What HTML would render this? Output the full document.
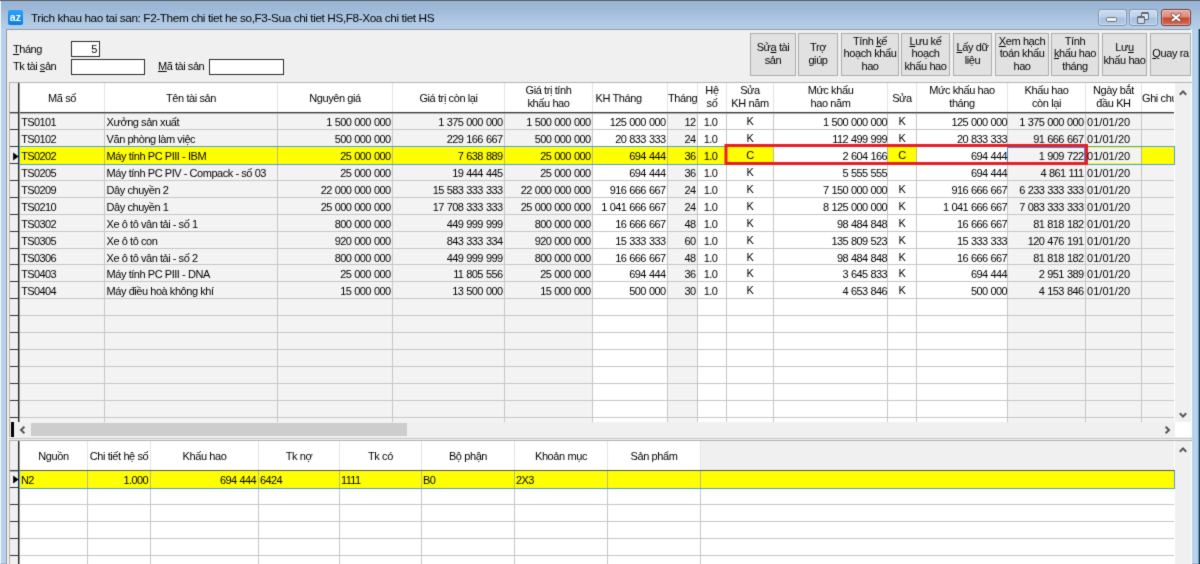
<!DOCTYPE html>
<html lang="vi"><head><meta charset="utf-8"><title>Trich khau hao tai san</title>
<style>
html,body{margin:0;padding:0}
body{width:1200px;height:564px;overflow:hidden;position:relative;background:#dfe6ee;font-family:"Liberation Sans",sans-serif;font-size:11px;color:#000}
div,span{position:absolute;box-sizing:border-box}
.t{white-space:nowrap;line-height:13px;height:13px;letter-spacing:-0.45px}
.n{letter-spacing:-0.62px;word-spacing:0.6px}
.r{text-align:right}.c{text-align:center}
.h{white-space:nowrap;line-height:12.5px;text-align:center;letter-spacing:-0.4px}
.btn{background:#e1e1e1;border:1px solid #adadad;top:33px;height:43px}
.btn span{left:-10px;right:-10px;text-align:center;line-height:12.4px;white-space:nowrap;letter-spacing:-0.4px}
u{text-decoration:underline;text-underline-offset:1px}
.vl{width:1px;background:#c6c6c6}
.hl{height:1px;background:#c6c6c6}
.tb{background:#fff;border:1px solid #2b2b2b}
#w{left:0;top:0;width:1200px;height:564px;filter:url(#soft)}
</style></head><body><svg width="0" height="0" style="position:absolute"><defs><filter id="soft" x="0" y="0" width="100%" height="100%" color-interpolation-filters="sRGB"><feConvolveMatrix order="3" kernelMatrix="0.02 0.08 0.02 0.08 0.6 0.08 0.02 0.08 0.02" edgeMode="duplicate" preserveAlpha="true"/></filter></defs></svg><div id="w">

<div style="left:0;top:0;width:1200px;height:29px;background:linear-gradient(#98b4d2 0,#9db8d6 8px,#adc7e3 20px,#b5cee8 29px)"></div>
<div style="left:0;top:0;width:1200px;height:1px;background:#5a5f66"></div>
<div style="left:0;top:1px;width:1px;height:563px;background:#f4f7fb"></div>
<div style="left:1px;top:29px;width:6px;height:535px;background:#b9d1ea"></div>
<div style="left:1192px;top:29px;width:7px;height:535px;background:#b9d1ea"></div>
<div style="left:1198px;top:29px;width:1px;height:535px;background:#6f9db5"></div>
<div style="left:1199px;top:29px;width:1px;height:535px;background:#0b3f55"></div>
<div style="left:6px;top:29px;width:1186px;height:540px;border:1px solid #979a9e;border-right:2px solid #fafafa;background:#f0f0f0"></div>
<div style="left:8px;top:10px;width:15px;height:15px;border-radius:2px;background:linear-gradient(#2aa3f7,#0a7be4)"><span style="left:0;width:15px;top:1px;text-align:center;color:#fff;font-weight:bold;font-size:10.5px;line-height:12px;letter-spacing:0.2px">az</span></div>
<div class="t" style="left:31px;top:11px;font-size:11.8px;line-height:15px;height:15px;letter-spacing:-0.41px">Trich khau hao tai san: F2-Them chi tiet he so,F3-Sua chi tiet HS,F8-Xoa chi tiet HS</div>
<div style="left:1098px;top:9px;width:29px;height:17px;border:1px solid #8097b3;border-radius:3px;box-shadow:inset 0 0 0 1px rgba(255,255,255,.38);background:linear-gradient(#c9dcf0 0,#bcd2ea 48%,#a6c1df 52%,#b1cae5 100%)"><span style="left:7px;top:7px;width:11px;height:5px;border:1px solid #6b6f76;border-radius:1.5px;background:#f2f2f2"></span></div>
<div style="left:1129px;top:9px;width:29px;height:17px;border:1px solid #8097b3;border-radius:3px;box-shadow:inset 0 0 0 1px rgba(255,255,255,.38);background:linear-gradient(#c9dcf0 0,#bcd2ea 48%,#a6c1df 52%,#b1cae5 100%)"><span style="left:11px;top:2px;width:8px;height:8px;border:1px solid #5d6470;border-top-width:2px;border-radius:1.5px;background:#dfe8f2"></span><span style="left:7px;top:6px;width:8px;height:8px;border:1px solid #5d6470;border-top-width:2px;border-radius:1.5px;background:#cfdcec"></span></div>
<div style="left:1161px;top:9px;width:30px;height:17px;border:1px solid #7b3a3a;border-radius:3px;box-shadow:inset 0 0 0 1px rgba(255,255,255,.38);background:linear-gradient(#e9aa9c 0,#dd8a78 48%,#c6432a 52%,#d36e58 100%)"><svg style="position:absolute;left:8px;top:2px" width="12" height="11" viewBox="0 0 12 11"><path d="M2.6 2.6 L9.4 8.4 M9.4 2.6 L2.6 8.4" stroke="#6a3a3a" stroke-width="3.6" stroke-linecap="round"/><path d="M2.6 2.6 L9.4 8.4 M9.4 2.6 L2.6 8.4" stroke="#fff" stroke-width="2.1" stroke-linecap="round"/></svg></div>
<div class="t" style="left:13px;top:43px"><u>T</u>háng</div>
<div class="tb" style="left:71px;top:41px;width:29px;height:16px"></div>
<div class="t r" style="left:71px;top:43px;width:26px">5</div>
<div class="t" style="left:13px;top:60px">Tk tài <u>s</u>ản</div>
<div class="tb" style="left:71px;top:59px;width:74px;height:16px"></div>
<div class="t" style="left:158px;top:60px"><u>M</u>ã tài sản</div>
<div class="tb" style="left:209px;top:59px;width:75px;height:16px"></div>
<div class="btn" style="left:750px;width:46px"><span style="top:7.1px">Sử<u>a</u> tài<br>sản</span></div>
<div class="btn" style="left:798px;width:40px"><span style="top:7.1px">Trợ<br>giúp</span></div>
<div class="btn" style="left:841px;width:58px"><span style="top:0.9px">Tính <u>k</u>ế<br>hoạch khấu<br>hao</span></div>
<div class="btn" style="left:901px;width:49px"><span style="top:0.9px"><u>L</u>ưu kế<br>hoạch<br>khấu hao</span></div>
<div class="btn" style="left:953px;width:39px"><span style="top:7.1px"><u>L</u>ấy dữ<br>liệu</span></div>
<div class="btn" style="left:995px;width:54px"><span style="top:0.9px"><u>X</u>em hạch<br>toán khấu<br>hao</span></div>
<div class="btn" style="left:1051px;width:48px"><span style="top:0.9px">Tính<br><u>k</u>hấu hao<br>tháng</span></div>
<div class="btn" style="left:1102px;width:45px"><span style="top:7.1px">Lư<u>u</u><br>khấu hao</span></div>
<div class="btn" style="left:1150px;width:41px"><span style="top:13.3px"><u>Q</u>uay ra</span></div>
<div style="left:9px;top:82px;width:1183px;height:358px;background:#fff;border:1px solid #b2b2b2;border-right:0;border-bottom:0"></div>
<div style="left:10px;top:83px;width:8px;height:339px;background:#f0f0f0"></div>
<div style="left:20px;top:113px;width:84px;height:309px;background:#f3f3f3"></div>
<div style="left:105px;top:113px;width:172px;height:309px;background:#f3f3f3"></div>
<div style="left:278px;top:113px;width:114px;height:309px;background:#f3f3f3"></div>
<div style="left:393px;top:113px;width:111px;height:309px;background:#f3f3f3"></div>
<div style="left:505px;top:113px;width:87px;height:309px;background:#f3f3f3"></div>
<div style="left:668px;top:113px;width:29px;height:309px;background:#f3f3f3"></div>
<div style="left:1008px;top:113px;width:77px;height:309px;background:#f3f3f3"></div>
<div style="left:1086px;top:113px;width:55px;height:309px;background:#f3f3f3"></div>
<div style="left:1142px;top:113px;width:32px;height:309px;background:#f3f3f3"></div>
<div class="vl" style="left:104px;top:83px;height:29px;background:#e4e4e4"></div>
<div class="vl" style="left:277px;top:83px;height:29px;background:#e4e4e4"></div>
<div class="vl" style="left:392px;top:83px;height:29px;background:#e4e4e4"></div>
<div class="vl" style="left:504px;top:83px;height:29px;background:#e4e4e4"></div>
<div class="vl" style="left:592px;top:83px;height:29px;background:#e4e4e4"></div>
<div class="vl" style="left:667px;top:83px;height:29px;background:#e4e4e4"></div>
<div class="vl" style="left:697px;top:83px;height:29px;background:#e4e4e4"></div>
<div class="vl" style="left:726px;top:83px;height:29px;background:#e4e4e4"></div>
<div class="vl" style="left:773px;top:83px;height:29px;background:#e4e4e4"></div>
<div class="vl" style="left:887px;top:83px;height:29px;background:#e4e4e4"></div>
<div class="vl" style="left:916px;top:83px;height:29px;background:#e4e4e4"></div>
<div class="vl" style="left:1007px;top:83px;height:29px;background:#e4e4e4"></div>
<div class="vl" style="left:1085px;top:83px;height:29px;background:#e4e4e4"></div>
<div class="vl" style="left:1141px;top:83px;height:29px;background:#e4e4e4"></div>
<div class="vl" style="left:104px;top:113px;height:309px"></div>
<div class="vl" style="left:277px;top:113px;height:309px"></div>
<div class="vl" style="left:392px;top:113px;height:309px"></div>
<div class="vl" style="left:504px;top:113px;height:309px"></div>
<div class="vl" style="left:592px;top:113px;height:309px"></div>
<div class="vl" style="left:667px;top:113px;height:309px"></div>
<div class="vl" style="left:697px;top:113px;height:309px"></div>
<div class="vl" style="left:726px;top:113px;height:309px"></div>
<div class="vl" style="left:773px;top:113px;height:309px"></div>
<div class="vl" style="left:887px;top:113px;height:309px"></div>
<div class="vl" style="left:916px;top:113px;height:309px"></div>
<div class="vl" style="left:1007px;top:113px;height:309px"></div>
<div class="vl" style="left:1085px;top:113px;height:309px"></div>
<div class="vl" style="left:1141px;top:113px;height:309px"></div>
<div class="hl" style="left:19px;top:129px;width:1155px"></div>
<div style="left:10px;top:129px;width:9px;height:1px;background:#333"></div>
<div class="hl" style="left:19px;top:146px;width:1155px"></div>
<div style="left:10px;top:146px;width:9px;height:1px;background:#333"></div>
<div class="hl" style="left:19px;top:163px;width:1155px"></div>
<div style="left:10px;top:163px;width:9px;height:1px;background:#333"></div>
<div class="hl" style="left:19px;top:180px;width:1155px"></div>
<div style="left:10px;top:180px;width:9px;height:1px;background:#333"></div>
<div class="hl" style="left:19px;top:197px;width:1155px"></div>
<div style="left:10px;top:197px;width:9px;height:1px;background:#333"></div>
<div class="hl" style="left:19px;top:214px;width:1155px"></div>
<div style="left:10px;top:214px;width:9px;height:1px;background:#333"></div>
<div class="hl" style="left:19px;top:231px;width:1155px"></div>
<div style="left:10px;top:231px;width:9px;height:1px;background:#333"></div>
<div class="hl" style="left:19px;top:248px;width:1155px"></div>
<div style="left:10px;top:248px;width:9px;height:1px;background:#333"></div>
<div class="hl" style="left:19px;top:264px;width:1155px"></div>
<div style="left:10px;top:264px;width:9px;height:1px;background:#333"></div>
<div class="hl" style="left:19px;top:281px;width:1155px"></div>
<div style="left:10px;top:281px;width:9px;height:1px;background:#333"></div>
<div class="hl" style="left:19px;top:298px;width:1155px"></div>
<div style="left:10px;top:298px;width:9px;height:1px;background:#333"></div>
<div class="hl" style="left:19px;top:315px;width:1155px"></div>
<div style="left:10px;top:315px;width:9px;height:1px;background:#333"></div>
<div class="hl" style="left:19px;top:332px;width:1155px"></div>
<div style="left:10px;top:332px;width:9px;height:1px;background:#333"></div>
<div class="hl" style="left:19px;top:349px;width:1155px"></div>
<div style="left:10px;top:349px;width:9px;height:1px;background:#333"></div>
<div class="hl" style="left:19px;top:366px;width:1155px"></div>
<div style="left:10px;top:366px;width:9px;height:1px;background:#333"></div>
<div class="hl" style="left:19px;top:383px;width:1155px"></div>
<div style="left:10px;top:383px;width:9px;height:1px;background:#333"></div>
<div class="hl" style="left:19px;top:400px;width:1155px"></div>
<div style="left:10px;top:400px;width:9px;height:1px;background:#333"></div>
<div class="hl" style="left:19px;top:417px;width:1155px"></div>
<div style="left:10px;top:417px;width:9px;height:1px;background:#333"></div>
<div style="left:10px;top:112px;width:1164px;height:1px;background:#3a3a3a"></div>
<div style="left:10px;top:113px;width:1164px;height:1px;background:#b0b0b0"></div>
<div style="left:18px;top:83px;width:1px;height:339px;background:#222"></div>
<div style="left:19px;top:83px;width:1px;height:339px;background:#9a9a9a"></div>
<div class="h" style="left:20px;top:92.0px;width:84px;overflow:hidden;height:14px">Mã số</div>
<div class="h" style="left:105px;top:92.0px;width:172px;overflow:hidden;height:14px">Tên tài sản</div>
<div class="h" style="left:278px;top:92.0px;width:114px;overflow:hidden;height:14px">Nguyên giá</div>
<div class="h" style="left:393px;top:92.0px;width:111px;overflow:hidden;height:14px">Giá trị còn lại</div>
<div class="h" style="left:505px;top:84.3px;width:87px;overflow:hidden;height:27px">Giá trị tính<br>khấu hao</div>
<div class="h" style="left:593px;top:92.0px;width:74px;text-align:left;padding-left:2.5px;overflow:hidden;height:14px">KH Tháng</div>
<div class="h" style="left:668px;top:92.0px;width:29px;overflow:hidden;height:14px">Tháng</div>
<div class="h" style="left:698px;top:84.3px;width:28px;overflow:hidden;height:27px">Hệ<br>số</div>
<div class="h" style="left:727px;top:84.3px;width:46px;overflow:hidden;height:27px">Sửa<br>KH năm</div>
<div class="h" style="left:774px;top:84.3px;width:113px;overflow:hidden;height:27px">Mức khấu<br>hao năm</div>
<div class="h" style="left:888px;top:92.0px;width:28px;overflow:hidden;height:14px">Sửa</div>
<div class="h" style="left:917px;top:84.3px;width:90px;overflow:hidden;height:27px">Mức khấu hao<br>tháng</div>
<div class="h" style="left:1008px;top:84.3px;width:77px;overflow:hidden;height:27px">Khấu hao<br>còn lại</div>
<div class="h" style="left:1086px;top:84.3px;width:55px;overflow:hidden;height:27px">Ngày bắt<br>đầu KH</div>
<div class="h" style="left:1142px;top:92.0px;width:32px;text-align:left;overflow:hidden;height:14px">Ghi chú</div>
<div style="left:19px;top:146px;width:1156px;height:19px;background:#ffff00;border:1px solid #4f9de0"></div>
<div style="left:774px;top:147px;width:113px;height:17px;background:#fff"></div>
<div style="left:917px;top:147px;width:90px;height:17px;background:#fff"></div>
<div style="left:1008px;top:147px;width:77px;height:17px;background:#f3f3f3"></div>
<div style="left:1086px;top:148px;width:55px;height:15px;background:#f3f3f3"></div>
<div class="vl" style="left:104px;top:147px;height:17px;background:#b9b97a"></div>
<div class="vl" style="left:277px;top:147px;height:17px;background:#b9b97a"></div>
<div class="vl" style="left:392px;top:147px;height:17px;background:#b9b97a"></div>
<div class="vl" style="left:504px;top:147px;height:17px;background:#b9b97a"></div>
<div class="vl" style="left:592px;top:147px;height:17px;background:#b9b97a"></div>
<div class="vl" style="left:667px;top:147px;height:17px;background:#b9b97a"></div>
<div class="vl" style="left:697px;top:147px;height:17px;background:#b9b97a"></div>
<div class="vl" style="left:726px;top:147px;height:17px;background:#b9b97a"></div>
<div class="vl" style="left:773px;top:147px;height:17px;background:#b9b97a"></div>
<div class="vl" style="left:887px;top:147px;height:17px;background:#b9b97a"></div>
<div class="vl" style="left:916px;top:147px;height:17px;background:#b9b97a"></div>
<div class="vl" style="left:1007px;top:147px;height:17px;background:#b9b97a"></div>
<div class="vl" style="left:1085px;top:147px;height:17px;background:#b9b97a"></div>
<div class="vl" style="left:1141px;top:147px;height:17px;background:#b9b97a"></div>
<div style="left:1007px;top:147px;width:78px;height:17px;border:1px solid #3c8fe0"></div>
<svg style="position:absolute;left:720px;top:140px" width="372" height="30" viewBox="720 140 372 30"><rect x="726" y="145.5" width="360.5" height="18" fill="none" stroke="#ed1c24" stroke-width="3"/></svg>
<svg style="position:absolute;left:12px;top:152px" width="8" height="10" viewBox="0 0 8 10"><path d="M1.1 0.6 L6.6 4.6 L1.1 8.6 Z" fill="#000"/></svg>
<div id="ct" style="left:0;top:0;width:1175px;height:440px;transform:translateY(0.5px)">
<div class="t" style="left:21.3px;letter-spacing:-0.65px;top:115px">TS0101</div>
<div class="t" style="left:106.6px;top:115px">Xưởng sản xuất</div>
<div class="t r n" style="left:278px;width:112.4px;top:115px">1 500 000 000</div>
<div class="t r n" style="left:393px;width:109.4px;top:115px">1 375 000 000</div>
<div class="t r n" style="left:505px;width:85.4px;top:115px">1 500 000 000</div>
<div class="t r n" style="left:593px;width:72.4px;top:115px">125 000 000</div>
<div class="t r n" style="left:668px;width:27.4px;top:115px">12</div>
<div class="t c n" style="left:696.5px;width:28px;top:115px">1.0</div>
<div class="t c" style="left:727.0px;width:46px;top:114px">K</div>
<div class="t r n" style="left:774px;width:113.0px;top:115px">1 500 000 000</div>
<div class="t c" style="left:888.0px;width:28px;top:114px">K</div>
<div class="t r n" style="left:917px;width:90.0px;top:115px">125 000 000</div>
<div class="t r n" style="left:1008px;width:75.4px;top:115px">1 375 000 000</div>
<div class="t" style="left:1087px;letter-spacing:0.05px;top:115px">01/01/20</div>
<div class="t" style="left:21.3px;letter-spacing:-0.65px;top:132px">TS0102</div>
<div class="t" style="left:106.6px;top:132px">Văn phòng làm việc</div>
<div class="t r n" style="left:278px;width:112.4px;top:132px">500 000 000</div>
<div class="t r n" style="left:393px;width:109.4px;top:132px">229 166 667</div>
<div class="t r n" style="left:505px;width:85.4px;top:132px">500 000 000</div>
<div class="t r n" style="left:593px;width:72.4px;top:132px">20 833 333</div>
<div class="t r n" style="left:668px;width:27.4px;top:132px">24</div>
<div class="t c n" style="left:696.5px;width:28px;top:132px">1.0</div>
<div class="t c" style="left:727.0px;width:46px;top:131px">K</div>
<div class="t r n" style="left:774px;width:113.0px;top:132px">112 499 999</div>
<div class="t c" style="left:888.0px;width:28px;top:131px">K</div>
<div class="t r n" style="left:917px;width:90.0px;top:132px">20 833 333</div>
<div class="t r n" style="left:1008px;width:75.4px;top:132px">91 666 667</div>
<div class="t" style="left:1087px;letter-spacing:0.05px;top:132px">01/01/20</div>
<div class="t" style="left:21.3px;letter-spacing:-0.65px;top:149px">TS0202</div>
<div class="t" style="left:106.6px;top:149px">Máy tính PC PIII - IBM</div>
<div class="t r n" style="left:278px;width:112.4px;top:149px">25 000 000</div>
<div class="t r n" style="left:393px;width:109.4px;top:149px">7 638 889</div>
<div class="t r n" style="left:505px;width:85.4px;top:149px">25 000 000</div>
<div class="t r n" style="left:593px;width:72.4px;top:149px">694 444</div>
<div class="t r n" style="left:668px;width:27.4px;top:149px">36</div>
<div class="t c n" style="left:696.5px;width:28px;top:149px">1.0</div>
<div class="t c" style="left:727.0px;width:46px;top:148px">C</div>
<div class="t r n" style="left:774px;width:113.0px;top:149px">2 604 166</div>
<div class="t c" style="left:888.0px;width:28px;top:148px">C</div>
<div class="t r n" style="left:917px;width:90.0px;top:149px">694 444</div>
<div class="t r n" style="left:1008px;width:75.4px;top:149px">1 909 722</div>
<div class="t" style="left:1087px;letter-spacing:0.05px;top:149px">01/01/20</div>
<div class="t" style="left:21.3px;letter-spacing:-0.65px;top:166px">TS0205</div>
<div class="t" style="left:106.6px;top:166px">Máy tính PC PIV - Compack - số 03</div>
<div class="t r n" style="left:278px;width:112.4px;top:166px">25 000 000</div>
<div class="t r n" style="left:393px;width:109.4px;top:166px">19 444 445</div>
<div class="t r n" style="left:505px;width:85.4px;top:166px">25 000 000</div>
<div class="t r n" style="left:593px;width:72.4px;top:166px">694 444</div>
<div class="t r n" style="left:668px;width:27.4px;top:166px">36</div>
<div class="t c n" style="left:696.5px;width:28px;top:166px">1.0</div>
<div class="t c" style="left:727.0px;width:46px;top:165px">K</div>
<div class="t r n" style="left:774px;width:113.0px;top:166px">5 555 555</div>
<div class="t r n" style="left:917px;width:90.0px;top:166px">694 444</div>
<div class="t r n" style="left:1008px;width:75.4px;top:166px">4 861 111</div>
<div class="t" style="left:1087px;letter-spacing:0.05px;top:166px">01/01/20</div>
<div class="t" style="left:21.3px;letter-spacing:-0.65px;top:183px">TS0209</div>
<div class="t" style="left:106.6px;top:183px">Dây chuyền 2</div>
<div class="t r n" style="left:278px;width:112.4px;top:183px">22 000 000 000</div>
<div class="t r n" style="left:393px;width:109.4px;top:183px">15 583 333 333</div>
<div class="t r n" style="left:505px;width:85.4px;top:183px">22 000 000 000</div>
<div class="t r n" style="left:593px;width:72.4px;top:183px">916 666 667</div>
<div class="t r n" style="left:668px;width:27.4px;top:183px">24</div>
<div class="t c n" style="left:696.5px;width:28px;top:183px">1.0</div>
<div class="t c" style="left:727.0px;width:46px;top:182px">K</div>
<div class="t r n" style="left:774px;width:113.0px;top:183px">7 150 000 000</div>
<div class="t c" style="left:888.0px;width:28px;top:182px">K</div>
<div class="t r n" style="left:917px;width:90.0px;top:183px">916 666 667</div>
<div class="t r n" style="left:1008px;width:75.4px;top:183px">6 233 333 333</div>
<div class="t" style="left:1087px;letter-spacing:0.05px;top:183px">01/01/20</div>
<div class="t" style="left:21.3px;letter-spacing:-0.65px;top:200px">TS0210</div>
<div class="t" style="left:106.6px;top:200px">Dây chuyền 1</div>
<div class="t r n" style="left:278px;width:112.4px;top:200px">25 000 000 000</div>
<div class="t r n" style="left:393px;width:109.4px;top:200px">17 708 333 333</div>
<div class="t r n" style="left:505px;width:85.4px;top:200px">25 000 000 000</div>
<div class="t r n" style="left:593px;width:72.4px;top:200px">1 041 666 667</div>
<div class="t r n" style="left:668px;width:27.4px;top:200px">24</div>
<div class="t c n" style="left:696.5px;width:28px;top:200px">1.0</div>
<div class="t c" style="left:727.0px;width:46px;top:199px">K</div>
<div class="t r n" style="left:774px;width:113.0px;top:200px">8 125 000 000</div>
<div class="t c" style="left:888.0px;width:28px;top:199px">K</div>
<div class="t r n" style="left:917px;width:90.0px;top:200px">1 041 666 667</div>
<div class="t r n" style="left:1008px;width:75.4px;top:200px">7 083 333 333</div>
<div class="t" style="left:1087px;letter-spacing:0.05px;top:200px">01/01/20</div>
<div class="t" style="left:21.3px;letter-spacing:-0.65px;top:217px">TS0302</div>
<div class="t" style="left:106.6px;top:217px">Xe ô tô vân tải - số 1</div>
<div class="t r n" style="left:278px;width:112.4px;top:217px">800 000 000</div>
<div class="t r n" style="left:393px;width:109.4px;top:217px">449 999 999</div>
<div class="t r n" style="left:505px;width:85.4px;top:217px">800 000 000</div>
<div class="t r n" style="left:593px;width:72.4px;top:217px">16 666 667</div>
<div class="t r n" style="left:668px;width:27.4px;top:217px">48</div>
<div class="t c n" style="left:696.5px;width:28px;top:217px">1.0</div>
<div class="t c" style="left:727.0px;width:46px;top:216px">K</div>
<div class="t r n" style="left:774px;width:113.0px;top:217px">98 484 848</div>
<div class="t c" style="left:888.0px;width:28px;top:216px">K</div>
<div class="t r n" style="left:917px;width:90.0px;top:217px">16 666 667</div>
<div class="t r n" style="left:1008px;width:75.4px;top:217px">81 818 182</div>
<div class="t" style="left:1087px;letter-spacing:0.05px;top:217px">01/01/20</div>
<div class="t" style="left:21.3px;letter-spacing:-0.65px;top:234px">TS0305</div>
<div class="t" style="left:106.6px;top:234px">Xe ô tô con</div>
<div class="t r n" style="left:278px;width:112.4px;top:234px">920 000 000</div>
<div class="t r n" style="left:393px;width:109.4px;top:234px">843 333 334</div>
<div class="t r n" style="left:505px;width:85.4px;top:234px">920 000 000</div>
<div class="t r n" style="left:593px;width:72.4px;top:234px">15 333 333</div>
<div class="t r n" style="left:668px;width:27.4px;top:234px">60</div>
<div class="t c n" style="left:696.5px;width:28px;top:234px">1.0</div>
<div class="t c" style="left:727.0px;width:46px;top:233px">K</div>
<div class="t r n" style="left:774px;width:113.0px;top:234px">135 809 523</div>
<div class="t c" style="left:888.0px;width:28px;top:233px">K</div>
<div class="t r n" style="left:917px;width:90.0px;top:234px">15 333 333</div>
<div class="t r n" style="left:1008px;width:75.4px;top:234px">120 476 191</div>
<div class="t" style="left:1087px;letter-spacing:0.05px;top:234px">01/01/20</div>
<div class="t" style="left:21.3px;letter-spacing:-0.65px;top:251px">TS0306</div>
<div class="t" style="left:106.6px;top:251px">Xe ô tô vân tải - số 2</div>
<div class="t r n" style="left:278px;width:112.4px;top:251px">800 000 000</div>
<div class="t r n" style="left:393px;width:109.4px;top:251px">449 999 999</div>
<div class="t r n" style="left:505px;width:85.4px;top:251px">800 000 000</div>
<div class="t r n" style="left:593px;width:72.4px;top:251px">16 666 667</div>
<div class="t r n" style="left:668px;width:27.4px;top:251px">48</div>
<div class="t c n" style="left:696.5px;width:28px;top:251px">1.0</div>
<div class="t c" style="left:727.0px;width:46px;top:250px">K</div>
<div class="t r n" style="left:774px;width:113.0px;top:251px">98 484 848</div>
<div class="t c" style="left:888.0px;width:28px;top:250px">K</div>
<div class="t r n" style="left:917px;width:90.0px;top:251px">16 666 667</div>
<div class="t r n" style="left:1008px;width:75.4px;top:251px">81 818 182</div>
<div class="t" style="left:1087px;letter-spacing:0.05px;top:251px">01/01/20</div>
<div class="t" style="left:21.3px;letter-spacing:-0.65px;top:267px">TS0403</div>
<div class="t" style="left:106.6px;top:267px">Máy tính PC PIII - DNA</div>
<div class="t r n" style="left:278px;width:112.4px;top:267px">25 000 000</div>
<div class="t r n" style="left:393px;width:109.4px;top:267px">11 805 556</div>
<div class="t r n" style="left:505px;width:85.4px;top:267px">25 000 000</div>
<div class="t r n" style="left:593px;width:72.4px;top:267px">694 444</div>
<div class="t r n" style="left:668px;width:27.4px;top:267px">36</div>
<div class="t c n" style="left:696.5px;width:28px;top:267px">1.0</div>
<div class="t c" style="left:727.0px;width:46px;top:266px">K</div>
<div class="t r n" style="left:774px;width:113.0px;top:267px">3 645 833</div>
<div class="t c" style="left:888.0px;width:28px;top:266px">K</div>
<div class="t r n" style="left:917px;width:90.0px;top:267px">694 444</div>
<div class="t r n" style="left:1008px;width:75.4px;top:267px">2 951 389</div>
<div class="t" style="left:1087px;letter-spacing:0.05px;top:267px">01/01/20</div>
<div class="t" style="left:21.3px;letter-spacing:-0.65px;top:284px">TS0404</div>
<div class="t" style="left:106.6px;top:284px">Máy điều hoà không khí</div>
<div class="t r n" style="left:278px;width:112.4px;top:284px">15 000 000</div>
<div class="t r n" style="left:393px;width:109.4px;top:284px">13 500 000</div>
<div class="t r n" style="left:505px;width:85.4px;top:284px">15 000 000</div>
<div class="t r n" style="left:593px;width:72.4px;top:284px">500 000</div>
<div class="t r n" style="left:668px;width:27.4px;top:284px">30</div>
<div class="t c n" style="left:696.5px;width:28px;top:284px">1.0</div>
<div class="t c" style="left:727.0px;width:46px;top:283px">K</div>
<div class="t r n" style="left:774px;width:113.0px;top:284px">4 653 846</div>
<div class="t c" style="left:888.0px;width:28px;top:283px">K</div>
<div class="t r n" style="left:917px;width:90.0px;top:284px">500 000</div>
<div class="t r n" style="left:1008px;width:75.4px;top:284px">4 153 846</div>
<div class="t" style="left:1087px;letter-spacing:0.05px;top:284px">01/01/20</div>
</div>
<div style="left:1175px;top:83px;width:16px;height:339px;background:#f0f0f0"></div>
<svg style="position:absolute;left:1178px;top:88.5px" width="10" height="7" viewBox="0 0 10 7"><path d="M1.8 5.8 L5 2.4 L8.2 5.8" fill="none" stroke="#555" stroke-width="2"/></svg>
<svg style="position:absolute;left:1178px;top:411.5px" width="10" height="7" viewBox="0 0 10 7"><path d="M1.8 1.2 L5 4.6 L8.2 1.2" fill="none" stroke="#555" stroke-width="2"/></svg>
<div style="left:10px;top:422px;width:1165px;height:15px;background:#f0f0f0"></div>
<div style="left:1175px;top:422px;width:17px;height:15px;background:#fff"></div>
<div style="left:11px;top:422px;width:3px;height:15px;background:#000"></div>
<div style="left:31px;top:423px;width:376px;height:13px;background:#cdcdcd"></div>
<svg style="position:absolute;left:19px;top:425px" width="7" height="10" viewBox="0 0 7 10"><path d="M5.4 1.8 L2 5 L5.4 8.2" fill="none" stroke="#555" stroke-width="2"/></svg>
<svg style="position:absolute;left:1164px;top:425px" width="7" height="10" viewBox="0 0 7 10"><path d="M1.6 1.8 L5 5 L1.6 8.2" fill="none" stroke="#555" stroke-width="2"/></svg>
<div style="left:9px;top:437px;width:1183px;height:1px;background:#f0f0f0"></div>
<div style="left:9px;top:438px;width:1183px;height:1px;background:#c3c8d0"></div>
<div style="left:9px;top:439px;width:1183px;height:1px;background:#f0f0f0"></div>
<div style="left:9px;top:440px;width:1183px;height:126px;background:#fff;border:1px solid #b0b0b0;border-right:0;border-bottom:0"></div>
<div style="left:10px;top:441px;width:8px;height:130px;background:#f0f0f0"></div>
<div style="left:701px;top:441px;width:473px;height:29px;background:#f0f0f0"></div>
<div class="vl" style="left:87px;top:441px;height:29px;background:#e4e4e4"></div>
<div class="vl" style="left:87px;top:471px;height:100px"></div>
<div class="vl" style="left:150px;top:441px;height:29px;background:#e4e4e4"></div>
<div class="vl" style="left:150px;top:471px;height:100px"></div>
<div class="vl" style="left:258px;top:441px;height:29px;background:#e4e4e4"></div>
<div class="vl" style="left:258px;top:471px;height:100px"></div>
<div class="vl" style="left:339px;top:441px;height:29px;background:#e4e4e4"></div>
<div class="vl" style="left:339px;top:471px;height:100px"></div>
<div class="vl" style="left:421px;top:441px;height:29px;background:#e4e4e4"></div>
<div class="vl" style="left:421px;top:471px;height:100px"></div>
<div class="vl" style="left:514px;top:441px;height:29px;background:#e4e4e4"></div>
<div class="vl" style="left:514px;top:471px;height:100px"></div>
<div class="vl" style="left:607px;top:441px;height:29px;background:#e4e4e4"></div>
<div class="vl" style="left:607px;top:471px;height:100px"></div>
<div class="vl" style="left:700px;top:441px;height:29px;background:#e4e4e4"></div>
<div class="vl" style="left:700px;top:471px;height:100px"></div>
<div class="hl" style="left:19px;top:487px;width:1155px"></div>
<div style="left:10px;top:487px;width:9px;height:1px;background:#333"></div>
<div class="hl" style="left:19px;top:504px;width:1155px"></div>
<div style="left:10px;top:504px;width:9px;height:1px;background:#333"></div>
<div class="hl" style="left:19px;top:521px;width:1155px"></div>
<div style="left:10px;top:521px;width:9px;height:1px;background:#333"></div>
<div class="hl" style="left:19px;top:538px;width:1155px"></div>
<div style="left:10px;top:538px;width:9px;height:1px;background:#333"></div>
<div class="hl" style="left:19px;top:555px;width:1155px"></div>
<div style="left:10px;top:555px;width:9px;height:1px;background:#333"></div>
<div class="hl" style="left:19px;top:572px;width:1155px"></div>
<div style="left:10px;top:572px;width:9px;height:1px;background:#333"></div>
<div style="left:10px;top:470px;width:1164px;height:1px;background:#3a3a3a"></div>
<div style="left:10px;top:471px;width:1164px;height:1px;background:#b0b0b0"></div>
<div style="left:18px;top:441px;width:1px;height:130px;background:#222"></div>
<div style="left:19px;top:441px;width:1px;height:130px;background:#9a9a9a"></div>
<div class="h" style="left:20px;top:450px;width:67px;height:13px">Nguồn</div>
<div class="h" style="left:88px;top:450px;width:62px;height:13px">Chi tiết hệ số</div>
<div class="h" style="left:151px;top:450px;width:107px;height:13px">Khấu hao</div>
<div class="h" style="left:259px;top:450px;width:80px;height:13px">Tk nợ</div>
<div class="h" style="left:340px;top:450px;width:81px;height:13px">Tk có</div>
<div class="h" style="left:422px;top:450px;width:92px;height:13px">Bộ phận</div>
<div class="h" style="left:515px;top:450px;width:92px;height:13px">Khoản mục</div>
<div class="h" style="left:608px;top:450px;width:92px;height:13px">Sản phẩm</div>
<div style="left:19px;top:470px;width:1156px;height:19px;background:#ffff00;border:1px solid #4f9de0;border-top-color:#555"></div>
<div class="vl" style="left:87px;top:471px;height:17px;background:#b9b97a"></div>
<div class="vl" style="left:150px;top:471px;height:17px;background:#b9b97a"></div>
<div class="vl" style="left:258px;top:471px;height:17px;background:#b9b97a"></div>
<div class="vl" style="left:339px;top:471px;height:17px;background:#b9b97a"></div>
<div class="vl" style="left:421px;top:471px;height:17px;background:#b9b97a"></div>
<div class="vl" style="left:514px;top:471px;height:17px;background:#b9b97a"></div>
<div class="vl" style="left:607px;top:471px;height:17px;background:#b9b97a"></div>
<div class="vl" style="left:700px;top:471px;height:17px;background:#b9b97a"></div>
<svg style="position:absolute;left:12px;top:475px" width="8" height="10" viewBox="0 0 8 10"><path d="M1.1 0.6 L6.6 4.6 L1.1 8.6 Z" fill="#000"/></svg>
<div class="t n" style="left:21px;top:474px">N2</div>
<div class="t r n" style="left:88px;width:60px;top:474px">1.000</div>
<div class="t r n" style="left:151px;width:105px;top:474px">694 444</div>
<div class="t n" style="left:260px;top:474px">6424</div>
<div class="t n" style="left:341px;top:474px">1111</div>
<div class="t n" style="left:423px;top:474px">B0</div>
<div class="t n" style="left:516px;top:474px">2X3</div>
<div style="left:1175px;top:441px;width:16px;height:130px;background:#f0f0f0"></div>
<svg style="position:absolute;left:1178px;top:446px" width="10" height="7" viewBox="0 0 10 7"><path d="M1.8 5.8 L5 2.4 L8.2 5.8" fill="none" stroke="#555" stroke-width="2"/></svg>
</div></body></html>
